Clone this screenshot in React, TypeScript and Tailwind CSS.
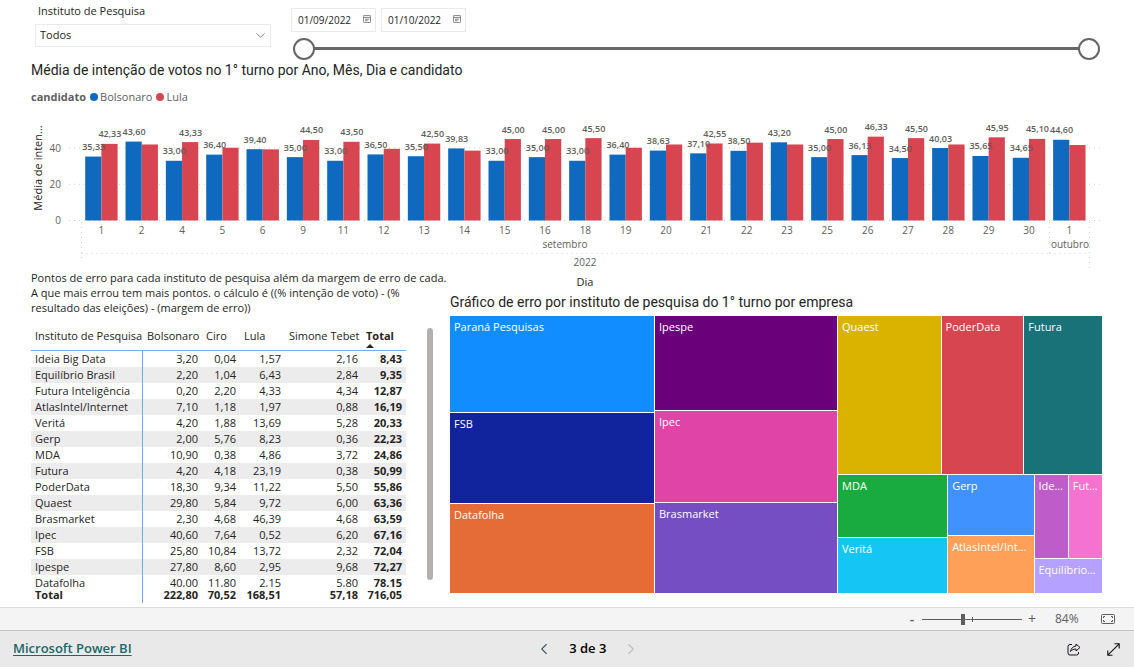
import React, { useState } from 'react'
import { ChevronDown, ChevronLeft, ChevronRight } from 'lucide-react'

// label: false means the data label is hidden because it would collide with its neighbour
const days = [
  { day: '1', bolsonaro: 35.33, lula: 42.33, label: true },
  { day: '2', bolsonaro: 43.6, lula: 42, label: false },
  { day: '4', bolsonaro: 33, lula: 43.33, label: true },
  { day: '5', bolsonaro: 36.4, lula: 40.2, label: false },
  { day: '6', bolsonaro: 39.4, lula: 39.3, label: false },
  { day: '9', bolsonaro: 35, lula: 44.5, label: true },
  { day: '11', bolsonaro: 33, lula: 43.5, label: true },
  { day: '12', bolsonaro: 36.5, lula: 39.6, label: false },
  { day: '13', bolsonaro: 35.5, lula: 42.5, label: true },
  { day: '14', bolsonaro: 39.83, lula: 38.6, label: false },
  { day: '15', bolsonaro: 33, lula: 45, label: true },
  { day: '16', bolsonaro: 35, lula: 45, label: true },
  { day: '18', bolsonaro: 33, lula: 45.5, label: true },
  { day: '19', bolsonaro: 36.4, lula: 40.2, label: false },
  { day: '20', bolsonaro: 38.63, lula: 42, label: false },
  { day: '21', bolsonaro: 37.1, lula: 42.55, label: true },
  { day: '22', bolsonaro: 38.5, lula: 43, label: false },
  { day: '23', bolsonaro: 43.2, lula: 42, label: false },
  { day: '25', bolsonaro: 35, lula: 45, label: true },
  { day: '26', bolsonaro: 36.13, lula: 46.33, label: true },
  { day: '27', bolsonaro: 34.5, lula: 45.5, label: true },
  { day: '28', bolsonaro: 40.03, lula: 42, label: false },
  { day: '29', bolsonaro: 35.65, lula: 45.95, label: true },
  { day: '30', bolsonaro: 34.65, lula: 45.1, label: true },
  { day: '1', bolsonaro: 44.6, lula: 41.7, label: false },
]

const rows = [
  ['Ideia Big Data', '3,20', '0,04', '1,57', '2,16', '8,43'],
  ['Equilíbrio Brasil', '2,20', '1,04', '6,43', '2,84', '9,35'],
  ['Futura Inteligência', '0,20', '2,20', '4,33', '4,34', '12,87'],
  ['AtlasIntel/Internet', '7,10', '1,18', '1,97', '0,88', '16,19'],
  ['Veritá', '4,20', '1,88', '13,69', '5,28', '20,33'],
  ['Gerp', '2,00', '5,76', '8,23', '0,36', '22,23'],
  ['MDA', '10,90', '0,38', '4,86', '3,72', '24,86'],
  ['Futura', '4,20', '4,18', '23,19', '0,38', '50,99'],
  ['PoderData', '18,30', '9,34', '11,22', '5,50', '55,86'],
  ['Quaest', '29,80', '5,84', '9,72', '6,00', '63,36'],
  ['Brasmarket', '2,30', '4,68', '46,39', '4,68', '63,59'],
  ['Ipec', '40,60', '7,64', '0,52', '6,20', '67,16'],
  ['FSB', '25,80', '10,84', '13,72', '2,32', '72,04'],
  ['Ipespe', '27,80', '8,60', '2,95', '9,68', '72,27'],
  ['Datafolha', '40,00', '11,80', '2,15', '5,80', '78,15'],
]

const totals = ['222,80', '70,52', '168,51', '57,18', '716,05']

const format = (value: number) => value.toFixed(2).replace('.', ',')

const BASE = 111
const UNIT = 1.81
const STEP = 40.33
const BAR = 16.2

const BarChart: React.FC = () => (
  <svg viewBox="0 0 1072 180" className="mt-[5px] block w-full" role="img" aria-label="Média de intenção de votos por dia">
    <g stroke="#d2d0ce" strokeDasharray="1 4">
      {[0, 20, 40].map((tick) => (
        <line key={tick} x1="38" x2="1072" y1={BASE - tick * UNIT - 0.5} y2={BASE - tick * UNIT - 0.5} />
      ))}
      <path d="M50.5 112V152M50.5 143.5H1018M1018.5 112V143.5M1018.5 143.5H1058M1058.5 112V162" fill="none" />
    </g>
    <g className="fill-[#605e5c] text-[10px]" textAnchor="end">
      <text x="30" y="42">40</text>
      <text x="30" y="78">20</text>
      <text x="30" y="114">0</text>
    </g>
    <text transform="translate(11 58) rotate(-90)" textAnchor="middle" className="fill-[#252423] text-[11px]">
      Média de inten...
    </text>
    {days.map((d, i) => {
      const x = 54.2 + i * STEP
      return (
        <g key={i}>
          <rect x={x} y={BASE - d.bolsonaro * UNIT - 0.5} width={BAR} height={d.bolsonaro * UNIT} fill="#0f6abf" />
          <rect x={x + BAR} y={BASE - d.lula * UNIT - 0.5} width={BAR} height={d.lula * UNIT} fill="#d64550" />
          <text x={x + BAR} y="124" textAnchor="middle" className="fill-[#605e5c] text-[10px]">{d.day}</text>
        </g>
      )
    })}
    <g className="fill-[#605e5c] text-[9px] font-semibold" textAnchor="middle">
      {days.map((d, i) => {
        const x = 54.6 + i * STEP
        return (
          <g key={i}>
            <text x={x + BAR / 2} y={BASE - d.bolsonaro * UNIT - 7}>{format(d.bolsonaro)}</text>
            {d.label && <text x={x + BAR * 1.5} y={BASE - d.lula * UNIT - 7}>{format(d.lula)}</text>}
          </g>
        )
      })}
    </g>
    <g className="fill-[#605e5c] text-[10px]" textAnchor="middle">
      <text x="534" y="138">setembro</text>
      <text x="1039" y="138">outubro</text>
      <text x="554" y="156">2022</text>
    </g>
    <text x="554" y="176" textAnchor="middle" className="fill-[#252423] text-[11px]">Dia</text>
  </svg>
)

const Tile: React.FC<{ name: string; className: string }> = ({ name, className }) => (
  <div className={`min-w-0 truncate px-1 pt-[3px] text-[11px] leading-4 text-white ${className}`}>{name}</div>
)

const Treemap: React.FC = () => (
  <div className="mt-1 mr-px grid h-[277px] grid-cols-[204fr_182fr_264fr] gap-px">
    <div className="grid grid-rows-[96fr_91fr_89fr] gap-px">
      <Tile name="Paraná Pesquisas" className="bg-[#118dff]" />
      <Tile name="FSB" className="bg-[#12239e]" />
      <Tile name="Datafolha" className="bg-[#e66c37]" />
    </div>
    <div className="grid grid-rows-[94fr_92fr_90fr] gap-px">
      <Tile name="Ipespe" className="bg-[#6b007b]" />
      <Tile name="Ipec" className="bg-[#e044a7]" />
      <Tile name="Brasmarket" className="bg-[#744ec2]" />
    </div>
    <div className="grid min-w-0 grid-rows-[159fr_118fr] gap-px">
      <div className="grid grid-cols-[103fr_82fr_78fr] gap-px">
        <Tile name="Quaest" className="bg-[#d9b300]" />
        <Tile name="PoderData" className="bg-[#d64550]" />
        <Tile name="Futura" className="bg-[#197278]" />
      </div>
      <div className="grid grid-cols-[110fr_86fr_68fr] gap-px">
        <div className="grid grid-rows-[62fr_56fr] gap-px">
          <Tile name="MDA" className="bg-[#1aab40]" />
          <Tile name="Veritá" className="bg-[#15c6f4]" />
        </div>
        <div className="grid min-w-0 grid-rows-[60fr_57fr] gap-px">
          <Tile name="Gerp" className="bg-[#4092ff]" />
          <Tile name="AtlasIntel/Internet" className="bg-[#ffa058]" />
        </div>
        <div className="grid min-w-0 grid-rows-[84fr_34fr] gap-px">
          <div className="grid grid-cols-2 gap-px">
            <Tile name="Ideia Big Data" className="bg-[#be5dc9]" />
            <Tile name="Futura Inteligência" className="bg-[#f472d0]" />
          </div>
          <Tile name="Equilíbrio Brasil" className="bg-[#b5a1ff]" />
        </div>
      </div>
    </div>
  </div>
)

const ErrorTable: React.FC = () => (
  <div className="mt-2 flex h-[280px]">
    <div className="w-[375px] overflow-hidden">
      <table className="w-full table-fixed border-separate border-spacing-0 text-[11px] leading-4 whitespace-nowrap">
        <colgroup>
          <col className="w-[112px]" />
          <col className="w-[59px]" />
          <col className="w-[38px]" />
          <col className="w-[45px]" />
          <col className="w-[77px]" />
          <col className="w-[44px]" />
        </colgroup>
        <thead className="sticky top-0 bg-white text-left">
          <tr className="h-[28px] align-top">
            {['Instituto de Pesquisa', 'Bolsonaro', 'Ciro', 'Lula', 'Simone Tebet'].map((head) => (
              <th key={head} scope="col" className="border-b border-[#62b0f5] px-1 pt-[5px] font-normal">{head}</th>
            ))}
            <th scope="col" className="border-b border-[#62b0f5] px-1 pt-[5px] font-bold">
              Total
              <svg viewBox="0 0 8 4" className="h-1 w-2"><path d="M0 4L4 0L8 4Z" fill="#252423" /></svg>
            </th>
          </tr>
        </thead>
        <tbody>
          {rows.map(([name, ...values]) => (
            <tr key={name} className="even:bg-[#ececec]">
              <th scope="row" className="border-r border-[#62b0f5] p-0 pl-1 text-left font-normal">{name}</th>
              {values.map((value, i) => (
                <td key={i} className="p-0 pr-1 text-right last:font-bold">{value}</td>
              ))}
            </tr>
          ))}
        </tbody>
        <tfoot className="sticky bottom-0 bg-white font-bold">
          <tr>
            <th scope="row" className="border-r border-[#62b0f5] p-0 pl-1 text-left">Total</th>
            {totals.map((value) => (
              <td key={value} className="p-0 pr-1 text-right">{value}</td>
            ))}
          </tr>
        </tfoot>
      </table>
    </div>
    <div className="mt-[5px] ml-[21px] h-[252px] w-1.5 rounded-full bg-[#b3b0ad]" />
  </div>
)

const DateBox: React.FC<{ label: string; value: string }> = ({ label, value }) => (
  <div className="flex h-6 w-[85px] items-center border border-[#eaeaea] pr-1 pl-1.5">
    <input aria-label={label} defaultValue={value} className="min-w-0 flex-1 text-[10px] outline-none" />
    <svg viewBox="0 0 8 8" className="mb-0.5 size-2 shrink-0" fill="none" stroke="#605e5c" strokeWidth="0.8">
      <rect x="0.4" y="0.4" width="7.2" height="7.2" rx="1" />
      <path d="M0.4 2.400H7.600M2 4.200H6.200M2 5.700H4.600" />
    </svg>
  </div>
)

const App: React.FC = () => {
  const [start, setStart] = useState(0)
  const [end, setEnd] = useState(100)
  const [zoom, setZoom] = useState(41)

  return (
    <div className="flex min-h-screen flex-col bg-white font-['Open_Sans',sans-serif] text-[#252423]">
      <main className="flex-1 px-[31px]">
        {/* Filters */}
        <div className="flex gap-5 pt-1 pr-[3px] pl-1">
          <div className="w-[236px] shrink-0">
            <label htmlFor="instituto" className="block pl-[3px] text-[11px] leading-[14px]">Instituto de Pesquisa</label>
            <div className="relative mt-1.5">
              <select id="instituto" className="block h-[23px] w-full appearance-none border border-[#eaeaea] pl-1 text-[11px]">
                <option>Todos</option>
              </select>
              <ChevronDown size={15} strokeWidth={1.2} className="pointer-events-none absolute top-1 right-[3px] text-[#605e5c]" />
            </div>
          </div>
          <div className="min-w-0 flex-1 pt-1">
            <div className="flex gap-[5px]">
              <DateBox label="Data inicial" value="01/09/2022" />
              <DateBox label="Data final" value="01/10/2022" />
            </div>
            <div className="relative mt-1.5 ml-0.5 h-[22px]">
              <div className="absolute inset-x-2 top-[9px] h-[3px] bg-[#666]" />
              <input
                type="range"
                aria-label="Início do período"
                value={start}
                onChange={(e) => setStart(Number(e.target.value))}
                className="pointer-events-none absolute inset-0 h-[22px] w-full appearance-none bg-transparent [&::-webkit-slider-thumb]:pointer-events-auto [&::-webkit-slider-thumb]:size-[22px] [&::-webkit-slider-thumb]:appearance-none [&::-webkit-slider-thumb]:rounded-full [&::-webkit-slider-thumb]:border-2 [&::-webkit-slider-thumb]:border-[#666] [&::-webkit-slider-thumb]:bg-white"
              />
              <input
                type="range"
                aria-label="Fim do período"
                value={end}
                onChange={(e) => setEnd(Number(e.target.value))}
                className="pointer-events-none absolute inset-0 h-[22px] w-full appearance-none bg-transparent [&::-webkit-slider-thumb]:pointer-events-auto [&::-webkit-slider-thumb]:size-[22px] [&::-webkit-slider-thumb]:appearance-none [&::-webkit-slider-thumb]:rounded-full [&::-webkit-slider-thumb]:border-2 [&::-webkit-slider-thumb]:border-[#666] [&::-webkit-slider-thumb]:bg-white"
              />
            </div>
          </div>
        </div>

        {/* Votes per day */}
        <section>
          <h2 className="font-[Roboto,sans-serif] text-[14px] leading-5">Média de intenção de votos no 1° turno por Ano, Mês, Dia e candidato</h2>
          <div className="mt-[9px] flex h-4 items-center text-[11px] text-[#605e5c]">
            <span className="mr-1 font-bold">candidato</span>
            <span className="mr-0.5 size-2 rounded-full bg-[#0f6abf]" />
            <span className="mr-1">Bolsonaro</span>
            <span className="mr-0.5 size-2 rounded-full bg-[#d64550]" />
            <span>Lula</span>
          </div>
          <BarChart />
        </section>

        {/* Errors per institute */}
        <section className="flex">
          <div className="-mt-5 w-[402px] shrink-0">
            <p className="text-[11px] leading-[15px] whitespace-nowrap">
              Pontos de erro para cada instituto de pesquisa além da margem de erro de cada.<br />
              A que mais errou tem mais pontos. o cálculo é ((% intenção de voto) - (%<br />
              resultado das eleições) - (margem de erro))
            </p>
            <ErrorTable />
          </div>
          <div className="ml-[17px] min-w-0 flex-1 pt-0.5">
            <h2 className="font-[Roboto,sans-serif] text-[14px] leading-5">Gráfico de erro por instituto de pesquisa do 1° turno por empresa</h2>
            <Treemap />
          </div>
        </section>
      </main>

      {/* Zoom bar */}
      <div className="flex h-[23px] items-center justify-end border-t border-[#dedede] bg-[#f4f4f4] pr-[19px] text-[#605e5c]">
        <button type="button" aria-label="Reduzir" className="w-3 text-[14px] leading-4 font-semibold">-</button>
        <div className="relative mx-1 flex h-3 w-[100px] items-center">
          <div className="absolute inset-x-0 top-1.5 h-px bg-[#605e5c]" />
          <div className="absolute top-1 left-1/2 h-[5px] w-px bg-[#605e5c]" />
          <input
            type="range"
            aria-label="Zoom"
            value={zoom}
            onChange={(e) => setZoom(Number(e.target.value))}
            className="relative h-3 w-full appearance-none bg-transparent [&::-webkit-slider-thumb]:h-[11px] [&::-webkit-slider-thumb]:w-1 [&::-webkit-slider-thumb]:appearance-none [&::-webkit-slider-thumb]:bg-[#605e5c]"
          />
        </div>
        <button type="button" aria-label="Ampliar" className="w-3 text-[14px] leading-4">+</button>
        <span className="ml-[17px] w-[46px] text-[12px]">84%</span>
        <button type="button" aria-label="Ajustar à página">
          <svg viewBox="0 0 14 10" className="block h-2.5 w-3.5" fill="none" stroke="#605e5c">
            <rect x="0.5" y="0.5" width="13" height="9" rx="1" />
            <path d="M2.5 4V2.5H4M10 2.5H11.5V4M11.5 6V7.5H10M4 7.5H2.5V6" />
          </svg>
        </button>
      </div>

      {/* Footer */}
      <footer className="flex h-[37px] items-center justify-between border-t border-[#c4c4c4] bg-[#e9e9e9] pl-[13px]">
        <a href="https://powerbi.microsoft.com" className="text-[13px] font-semibold text-[#17686a] underline underline-offset-2">Microsoft Power BI</a>
        <nav className="mr-2.5 flex items-center gap-4 text-[13px] font-semibold text-black">
          <button type="button" aria-label="Página anterior" className="text-[#3b6064]"><ChevronLeft size={18} strokeWidth={1.5} /></button>
          <span>3 de 3</span>
          <button type="button" aria-label="Próxima página" disabled className="text-[#bdbdbd]"><ChevronRight size={18} strokeWidth={1.5} /></button>
        </nav>
        <div className="flex">
          <button type="button" aria-label="Compartilhar" className="flex w-10 justify-center">
            <svg viewBox="0 0 14 13" className="h-[13px] w-3.5" fill="none" stroke="#1b1024" strokeLinejoin="round">
              <path d="M5 1.5H3A2 2 0 0 0 1 3.5V10A2 2 0 0 0 3 12H9.500A2 2 0 0 0 11.500 10V9" />
              <path d="M9 1L13 4.500L9 8V6C6.500 6 5 6.800 3.500 8.500C4 5.500 6 3.200 9 3Z" />
            </svg>
          </button>
          <button type="button" aria-label="Tela inteira" className="flex w-10 justify-center">
            <svg viewBox="0 0 13 13" className="size-[13px]" fill="none" stroke="#111" strokeWidth="1.1">
              <path d="M0.800 12.200L12.200 0.800M7.500 0.800H12.200V5.500M0.800 7.500V12.200H5.500" />
            </svg>
          </button>
        </div>
      </footer>
    </div>
  )
}

export default App
